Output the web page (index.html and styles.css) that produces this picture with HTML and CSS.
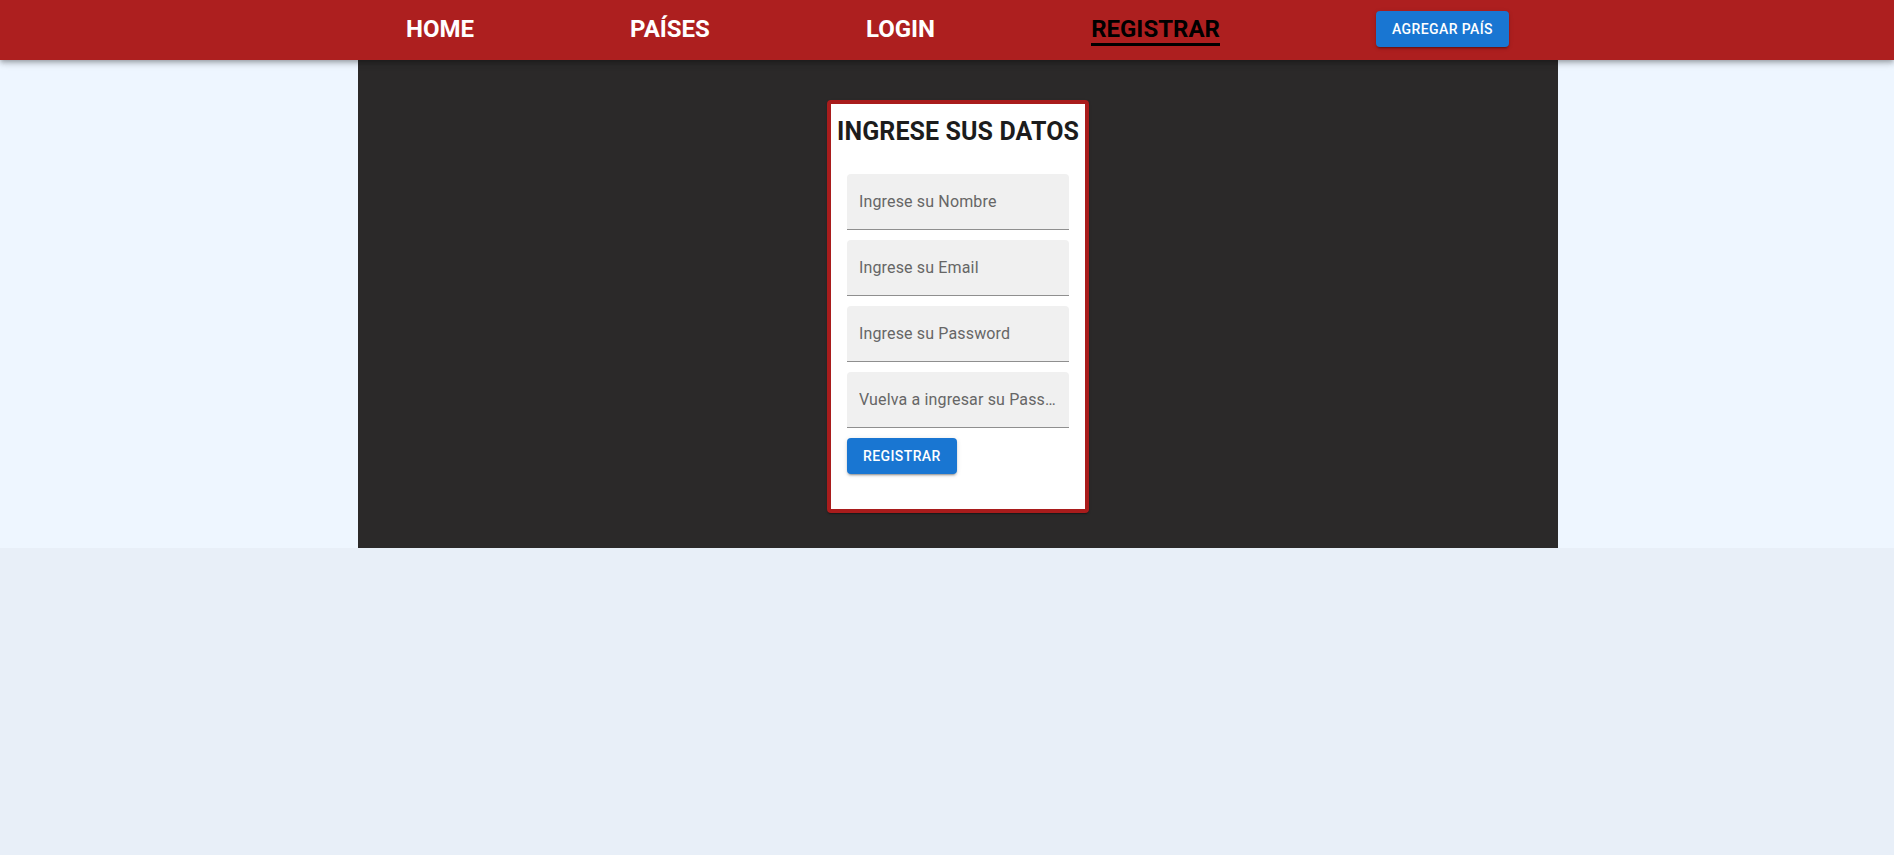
FILE: index.html
```html
<!DOCTYPE html>
<html lang="es">
<head>
<meta charset="utf-8">
<title>Registrar</title>
<link rel="stylesheet" href="styles.css">
</head>
<body>
<header class="appbar">
  <nav class="nav">
    <a class="nav-link" href="#">HOME</a>
    <a class="nav-link" href="#">PAÍSES</a>
    <a class="nav-link" href="#">LOGIN</a>
    <a class="nav-link active" href="#">REGISTRAR</a>
    <button class="btn" type="button">Agregar País</button>
  </nav>
</header>
<div class="band">
  <main class="stage">
    <section class="card">
      <h2 class="card-title">INGRESE SUS DATOS</h2>
      <form class="form">
        <div class="field"><input class="field-input" type="text" placeholder="Ingrese su Nombre"></div>
        <div class="field"><input class="field-input" type="email" placeholder="Ingrese su Email"></div>
        <div class="field"><input class="field-input" type="password" placeholder="Ingrese su Password"></div>
        <div class="field"><input class="field-input" type="password" placeholder="Vuelva a ingresar su Password"></div>
        <div class="actions"><button class="btn" type="button">Registrar</button></div>
      </form>
    </section>
  </main>
</div>
</body>
</html>
```
FILE: styles.css
```css
* { box-sizing: border-box; }
html, body { margin: 0; padding: 0; }
body {
  background: #e8eff8;
  font-family: Roboto, "Liberation Sans", Arial, sans-serif;
  min-height: 855px;
}
.appbar {
  position: relative;
  z-index: 2;
  height: 60px;
  background: #ad1f1f;
  box-shadow: 0 2px 4px -1px rgba(0,0,0,0.2), 0 4px 5px 0 rgba(0,0,0,0.14), 0 1px 10px 0 rgba(0,0,0,0.12);
}
.nav {
  width: 1200px;
  margin-left: 358px;
  height: 60px;
  padding: 0 49px 3px 48px;
  display: flex;
  align-items: center;
  justify-content: space-between;
}
.nav-link {
  font-size: 24px;
  font-weight: 700;
  line-height: 28px;
  color: #ffffff;
  text-decoration: none;
  padding-top: 3px;
  border-bottom: 3px solid transparent;
}
.nav-link.active {
  color: #000000;
  border-bottom-color: #000000;
}
.btn {
  height: 36px;
  padding: 0 16px;
  border: 0;
  border-radius: 4px;
  background: #1976d2;
  color: #ffffff;
  font-family: Roboto, "Liberation Sans", Arial, sans-serif;
  font-size: 14px;
  font-weight: 500;
  letter-spacing: 0.4px;
  text-transform: uppercase;
  box-shadow: 0 3px 1px -2px rgba(0,0,0,0.2), 0 2px 2px 0 rgba(0,0,0,0.14), 0 1px 5px 0 rgba(0,0,0,0.12);
  cursor: pointer;
}
.band {
  background: #eef6ff;
}
.stage {
  width: 1200px;
  margin-left: 358px;
  background: #2b2929;
  padding: 40px 0 35px;
  display: flex;
  justify-content: center;
}
.card {
  width: 262px;
  background: #ffffff;
  border: 4px solid #a91c1c;
  border-radius: 4px;
  padding: 0 16px 35px;
  box-shadow: 0 2px 1px -1px rgba(0,0,0,0.2), 0 1px 1px 0 rgba(0,0,0,0.14), 0 1px 3px 0 rgba(0,0,0,0.12);
}
.card-title {
  margin: 14px -12px 28px;
  font-size: 25px;
  line-height: 28px;
  font-weight: 700;
  letter-spacing: 0.1px;
  color: #1c1c1c;
  text-align: center;
  white-space: nowrap;
}
.form {
  display: flex;
  flex-direction: column;
  gap: 10px;
}
.field {
  height: 56px;
  background: #f0f0f0;
  border-radius: 4px 4px 0 0;
  border-bottom: 1px solid #8f8f8f;
}
.field-input {
  display: block;
  width: 100%;
  height: 55px;
  padding: 0 12px;
  border: 0;
  background: transparent;
  font-family: Roboto, "Liberation Sans", Arial, sans-serif;
  font-size: 16px;
  letter-spacing: 0.15px;
  color: #222;
  outline: none;
  text-overflow: ellipsis;
}
.field-input::placeholder {
  color: #666666;
  opacity: 1;
}
.actions {
  display: flex;
}
```
